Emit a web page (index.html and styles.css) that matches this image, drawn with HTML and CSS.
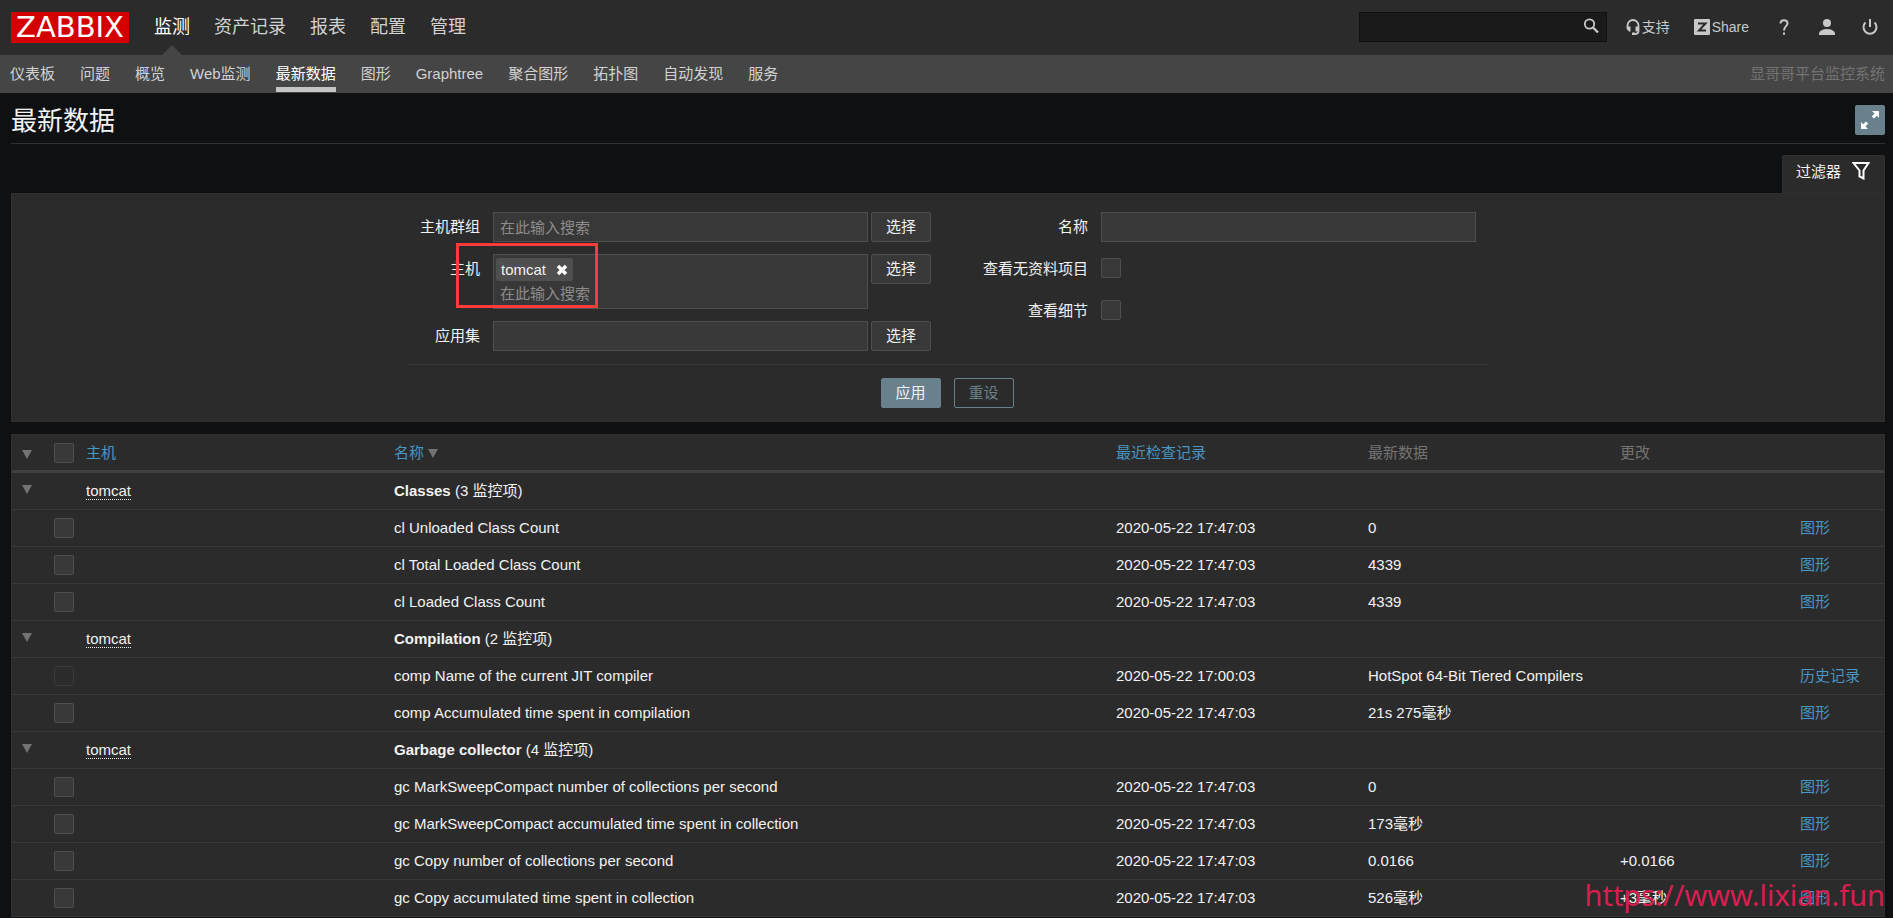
FILE: index.html
```
<!DOCTYPE html>
<html lang="zh-CN">
<head>
  <meta charset="UTF-8">
  <title>最新数据</title>
  <link rel="stylesheet" href="styles.css">
</head>
<body>
  <header class="top-nav">
    <a href="#" class="logo">ZABBIX</a>
    <nav class="main-menu">
      <a href="#" class="selected">监测</a>
      <a href="#">资产记录</a>
      <a href="#">报表</a>
      <a href="#">配置</a>
      <a href="#">管理</a>
    </nav>
    <form class="search">
      <input type="text" aria-label="搜索">
      <button type="button" aria-label="搜索">
        <svg width="16" height="16" viewBox="0 0 16 16" fill="none" stroke="#c8c8c8"><circle cx="6.500" cy="6" r="4.700" stroke-width="1.800"/><path d="M10 9.500L15 14.500" stroke-width="2.300"/></svg>
      </button>
    </form>
    <nav class="user-menu">
      <a href="#" class="support"><svg width="14" height="16" viewBox="0 0 14 16"><path d="M1.500 10V6.500a5.500 5.500 0 0 1 11 0V12q0 3-4 3" fill="none" stroke="#c8c8c8" stroke-width="1.800"/><path d="M1 7.500h3.500v5H3L1 10.500zM9.500 7.500H13v3l-2 2H9.500zM6 13.500h3V16H6z" fill="#c8c8c8"/></svg>支持</a>
      <a href="#" class="share"><svg width="16" height="16" viewBox="0 0 16 16"><rect width="16" height="16" rx="1" fill="#c8c8c8"/><path d="M4 4.500h7.500L5 11.500h7" fill="none" stroke="#2b2b2b" stroke-width="2"/></svg>Share</a>
      <a href="#" class="icon" aria-label="帮助"><svg width="10" height="16" viewBox="0 0 10 16"><path d="M1.500 4.500C1.500 0 8.500 0 8.500 4.500C8.500 7 5 7.500 5 11.500" fill="none" stroke="#c8c8c8" stroke-width="2"/><path d="M4 13.500h2v2.200H4z" fill="#c8c8c8"/></svg></a>
      <a href="#" class="icon" aria-label="用户"><svg width="16" height="16" viewBox="0 0 16 16" fill="#c8c8c8"><circle cx="8" cy="4" r="4"/><path d="M0 16v-2q2-4 8-4t8 4v2z"/></svg></a>
      <a href="#" class="icon" aria-label="退出"><svg width="16" height="16" viewBox="0 0 16 16" fill="none" stroke="#c8c8c8" stroke-width="2"><path d="M3.500 3.500a6.500 6.500 0 1 0 9 0M8 0v8"/></svg></a>
    </nav>
  </header>
  <nav class="sub-nav">
    <a href="#">仪表板</a>
    <a href="#">问题</a>
    <a href="#">概览</a>
    <a href="#">Web监测</a>
    <a href="#" class="selected">最新数据</a>
    <a href="#">图形</a>
    <a href="#">Graphtree</a>
    <a href="#">聚合图形</a>
    <a href="#">拓扑图</a>
    <a href="#">自动发现</a>
    <a href="#">服务</a>
    <span class="server-name">显哥哥平台监控系统</span>
  </nav>

  <main>
    <div class="title-bar">
      <h1>最新数据</h1>
      <button type="button" class="btn-fullscreen" aria-label="全屏">
        <svg width="18" height="18" viewBox="0 0 18 18" fill="#fff"><path d="M11 0h7v7l-2.200-2.200-2.800 2.800-2.200-2.200 2.700-2.800zM0 11l2.200 2.200L5 10.400l2.200 2.200-2.700 2.800L7 18H0z"/></svg>
      </button>
    </div>

    <div class="filter-tab">
      <button type="button">过滤器
        <svg width="18" height="18" viewBox="0 0 18 18" fill="none" stroke="#fff" stroke-width="2"><path d="M1.500 1h15l-5 7.500v8l-4-2v-6z"/></svg>
      </button>
    </div>

    <form class="filter">
      <div class="filter-columns">
        <div class="filter-grid">
          <label for="groups">主机群组</label>
          <input type="text" id="groups" placeholder="在此输入搜索">
          <button type="button">选择</button>
          <label for="hosts">主机</label>
          <div class="multiselect">
            <span class="tag">tomcat
              <button type="button" aria-label="移除"><svg width="12" height="12" viewBox="0 0 12 12"><path d="M2 2l8 8M10 2l-8 8" stroke="#fff" stroke-width="3.500"/></svg></button>
            </span>
            <input type="text" id="hosts" placeholder="在此输入搜索">
            <span class="marker"></span>
          </div>
          <button type="button">选择</button>
          <label for="application">应用集</label>
          <input type="text" id="application">
          <button type="button">选择</button>
        </div>
        <div class="filter-grid right">
          <label for="name">名称</label>
          <input type="text" id="name">
          <label for="nodata">查看无资料项目</label>
          <input type="checkbox" id="nodata">
          <label for="details">查看细节</label>
          <input type="checkbox" id="details">
        </div>
      </div>
      <div class="filter-buttons">
        <button type="button" class="apply">应用</button>
        <button type="button" class="reset">重设</button>
      </div>
    </form>

    <table class="list-table">
      <colgroup>
        <col class="col-toggle"><col class="col-check"><col class="col-host"><col>
        <col class="col-data"><col class="col-data"><col class="col-change"><col class="col-link">
      </colgroup>
      <thead>
        <tr>
          <th><button type="button" class="toggle" aria-label="全部折叠"></button></th>
          <th><input type="checkbox" aria-label="全选"></th>
          <th><a href="#">主机</a></th>
          <th><a href="#">名称 <span class="arrow"></span></a></th>
          <th><a href="#">最近检查记录</a></th>
          <th>最新数据</th>
          <th>更改</th>
          <th></th>
        </tr>
      </thead>
      <tbody>
        <tr>
          <td><button type="button" class="toggle" aria-label="折叠"></button></td>
          <td></td>
          <td><a href="#" class="host">tomcat</a></td>
          <td colspan="5"><b>Classes</b> (3 监控项)</td>
        </tr>
        <tr>
          <td></td>
          <td><input type="checkbox" aria-label="选择监控项"></td>
          <td></td>
          <td>cl Unloaded Class Count</td>
          <td>2020-05-22 17:47:03</td>
          <td>0</td>
          <td></td>
          <td><a href="#">图形</a></td>
        </tr>
        <tr>
          <td></td>
          <td><input type="checkbox" aria-label="选择监控项"></td>
          <td></td>
          <td>cl Total Loaded Class Count</td>
          <td>2020-05-22 17:47:03</td>
          <td>4339</td>
          <td></td>
          <td><a href="#">图形</a></td>
        </tr>
        <tr>
          <td></td>
          <td><input type="checkbox" aria-label="选择监控项"></td>
          <td></td>
          <td>cl Loaded Class Count</td>
          <td>2020-05-22 17:47:03</td>
          <td>4339</td>
          <td></td>
          <td><a href="#">图形</a></td>
        </tr>
        <tr>
          <td><button type="button" class="toggle" aria-label="折叠"></button></td>
          <td></td>
          <td><a href="#" class="host">tomcat</a></td>
          <td colspan="5"><b>Compilation</b> (2 监控项)</td>
        </tr>
        <tr>
          <td></td>
          <td><input type="checkbox" aria-label="选择监控项" disabled></td>
          <td></td>
          <td>comp Name of the current JIT compiler</td>
          <td>2020-05-22 17:00:03</td>
          <td>HotSpot 64-Bit Tiered Compilers</td>
          <td></td>
          <td><a href="#">历史记录</a></td>
        </tr>
        <tr>
          <td></td>
          <td><input type="checkbox" aria-label="选择监控项"></td>
          <td></td>
          <td>comp Accumulated time spent in compilation</td>
          <td>2020-05-22 17:47:03</td>
          <td>21s 275毫秒</td>
          <td></td>
          <td><a href="#">图形</a></td>
        </tr>
        <tr>
          <td><button type="button" class="toggle" aria-label="折叠"></button></td>
          <td></td>
          <td><a href="#" class="host">tomcat</a></td>
          <td colspan="5"><b>Garbage collector</b> (4 监控项)</td>
        </tr>
        <tr>
          <td></td>
          <td><input type="checkbox" aria-label="选择监控项"></td>
          <td></td>
          <td>gc MarkSweepCompact number of collections per second</td>
          <td>2020-05-22 17:47:03</td>
          <td>0</td>
          <td></td>
          <td><a href="#">图形</a></td>
        </tr>
        <tr>
          <td></td>
          <td><input type="checkbox" aria-label="选择监控项"></td>
          <td></td>
          <td>gc MarkSweepCompact accumulated time spent in collection</td>
          <td>2020-05-22 17:47:03</td>
          <td>173毫秒</td>
          <td></td>
          <td><a href="#">图形</a></td>
        </tr>
        <tr>
          <td></td>
          <td><input type="checkbox" aria-label="选择监控项"></td>
          <td></td>
          <td>gc Copy number of collections per second</td>
          <td>2020-05-22 17:47:03</td>
          <td>0.0166</td>
          <td>+0.0166</td>
          <td><a href="#">图形</a></td>
        </tr>
        <tr>
          <td></td>
          <td><input type="checkbox" aria-label="选择监控项"></td>
          <td></td>
          <td>gc Copy accumulated time spent in collection</td>
          <td>2020-05-22 17:47:03</td>
          <td>526毫秒</td>
          <td>+3毫秒</td>
          <td><a href="#">图形</a></td>
        </tr>
      </tbody>
    </table>
  </main>
  <div class="watermark">https://www.lixian.fun</div>
</body>
</html>
```
FILE: styles.css
```
* {
  box-sizing: border-box;
}
body {
  margin: 0;
  background: #0e1012;
  color: #f2f2f2;
  font-family: "Liberation Sans", "Noto Sans CJK SC", sans-serif;
  font-size: 15px;
  line-height: 20px;
}
a {
  color: #4796c4;
  text-decoration: none;
}
button, input {
  font: inherit;
  color: inherit;
}
button {
  padding: 0;
  cursor: pointer;
}
svg {
  display: block;
}

/* header */
.top-nav {
  display: flex;
  align-items: center;
  height: 55px;
  padding: 0 15px 1px 11px;
  background: #2b2b2b;
}
.logo {
  width: 118px;
  background: #d40000;
  color: #fff;
  font-family: "DejaVu Sans", sans-serif;
  font-size: 29px;
  line-height: 31px;
  text-align: center;
}
.main-menu {
  display: flex;
  gap: 24px;
  margin-left: 25px;
  font-size: 18px;
}
.main-menu a {
  position: relative;
  line-height: 54px;
  color: #d2d2d2;
}
.main-menu a.selected {
  color: #fff;
}
.main-menu a.selected::after {
  content: "";
  position: absolute;
  left: 50%;
  bottom: -1px;
  margin-left: -10px;
  border: 10px solid transparent;
  border-top: 0;
  border-bottom-color: #454545;
}
.search {
  display: flex;
  align-items: center;
  width: 248px;
  height: 30px;
  margin-left: auto;
  padding-right: 7px;
  background: #1a1a1a;
  border: 1px solid #101010;
}
.search input {
  flex: 1;
  min-width: 0;
  background: none;
  border: 0;
}
.search button {
  padding-bottom: 2px;
  background: none;
  border: 0;
}
.user-menu {
  display: flex;
  align-items: center;
  margin-left: 19px;
  padding-bottom: 1px;
  font-size: 14px;
}
.user-menu a {
  display: flex;
  align-items: center;
  gap: 2px;
  color: #c8c8c8;
}
.user-menu .share {
  margin-left: 24px;
}
.user-menu .icon {
  justify-content: center;
  width: 16px;
  margin-left: 27px;
}

.sub-nav {
  display: flex;
  gap: 25px;
  height: 38px;
  padding: 0 8px 0 10px;
  background: #454545;
}
.sub-nav a {
  height: 37px;
  padding-top: 9px;
  color: #d2d2d2;
}
.sub-nav a.selected {
  color: #fff;
  border-bottom: 5px solid #c4c4c4;
}
.server-name {
  margin-left: auto;
  padding-top: 9px;
  color: #737373;
}

/* page */
main {
  padding: 0 8px 0 11px;
}
.title-bar {
  display: flex;
  align-items: flex-end;
  justify-content: space-between;
  height: 51px;
  padding-bottom: 8px;
  border-bottom: 1px solid #303030;
}
h1 {
  margin: 0;
  font-size: 26px;
  font-weight: normal;
  line-height: 28px;
}
.btn-fullscreen {
  display: flex;
  align-items: center;
  justify-content: center;
  width: 30px;
  height: 30px;
  background: #69808d;
  border: 0;
  border-radius: 2px;
}
.filter-tab {
  display: flex;
  justify-content: flex-end;
  margin-top: 11px;
}
.filter-tab button {
  display: flex;
  gap: 11px;
  height: 38px;
  padding: 6px 14px 0 13px;
  background: #2b2b2b;
  border: 1px solid #303030;
  border-bottom: 0;
  border-radius: 2px 2px 0 0;
}

/* filter */
.filter {
  padding: 18px 10px 13px;
  background: #2b2b2b;
  border: 1px solid #303030;
}
.filter-columns {
  display: flex;
  width: 1080px;
  margin: 0 auto;
  padding-bottom: 13px;
  border-bottom: 1px solid #383838;
}
.filter-grid {
  display: grid;
  grid-template-columns: 72px 375px 60px;
  column-gap: 13px;
  row-gap: 12px;
  align-content: start;
}
.filter-grid.right {
  grid-template-columns: 147px 375px;
}
.filter label {
  padding-top: 5px;
  text-align: right;
}
.filter input[type="text"] {
  height: 30px;
  padding: 0 6px;
  background: #383838;
  border: 1px solid #4f4f4f;
}
.filter ::placeholder {
  color: #8c8c8c;
}
.filter-grid > button {
  width: 60px;
  height: 30px;
  margin-left: -10px;
  background: #383838;
  border: 1px solid #4f4f4f;
  border-radius: 2px;
}
.multiselect {
  position: relative;
  display: flex;
  flex-direction: column;
  align-items: flex-start;
  height: 55px;
  padding: 3px 2px;
  background: #383838;
  border: 1px solid #4f4f4f;
}
.multiselect input[type="text"] {
  width: 100%;
  padding: 0 4px;
  background: none;
  border: 0;
}
.tag {
  display: flex;
  flex-shrink: 0;
  align-items: center;
  gap: 10px;
  height: 23px;
  padding: 0 5px;
  background: #4f4f4f;
  border-radius: 2px;
}
.tag button {
  background: none;
  border: 0;
}
.marker {
  position: absolute;
  top: -12px;
  left: -38px;
  width: 142px;
  height: 65px;
  border: 3px solid #ff3a3a;
  pointer-events: none;
}
.filter-buttons {
  display: flex;
  justify-content: center;
  gap: 13px;
  margin-top: 13px;
  padding-right: 2px;
}
.filter-buttons button {
  width: 60px;
  height: 30px;
  border: 1px solid #69808d;
  border-radius: 2px;
}
.apply {
  background: #69808d;
}
.filter-buttons .reset {
  background: none;
  color: #69808d;
}

input[type="checkbox"] {
  appearance: none;
  display: block;
  width: 20px;
  height: 20px;
  margin: 0;
  background: #383838;
  border: 1px solid #4f4f4f;
  border-radius: 2px;
}
input[type="checkbox"]:disabled {
  background: none;
  border-color: #3a3a3a;
}
.filter input[type="checkbox"] {
  margin: 4px 0 6px;
}

/* data list */
.list-table {
  width: 100%;
  margin-top: 12px;
  table-layout: fixed;
  border-collapse: separate;
  border-spacing: 0;
  background: #2b2b2b;
  border: 1px solid #303030;
  border-bottom: 0;
}
.col-toggle { width: 37px; }
.col-check { width: 32px; }
.col-host { width: 308px; }
.col-data { width: 252px; }
.col-change { width: 180px; }
.col-link { width: 89px; }
th, td {
  height: 37px;
  padding: 0 5px;
  text-align: left;
  font-weight: normal;
  white-space: nowrap;
  border-bottom: 1px solid #383838;
}
th {
  height: 38px;
  color: #737373;
  border-bottom: 3px solid #404040;
}
.host {
  color: #f2f2f2;
  border-bottom: 1px dotted #f2f2f2;
}
.toggle, .arrow {
  display: inline-block;
  width: 0;
  height: 0;
  background: none;
  border: 5px solid transparent;
  border-top: 9px solid #737373;
  border-bottom: 0;
}
.toggle {
  display: block;
  margin: 0 0 3px 5px;
}
th .toggle {
  margin: 4px 0 0 5px;
}

.watermark {
  position: absolute;
  right: 8px;
  top: 875px;
  font-family: "Noto Sans", sans-serif;
  font-size: 29px;
  line-height: 40px;
  color: #d81e50;
  pointer-events: none;
}
```
